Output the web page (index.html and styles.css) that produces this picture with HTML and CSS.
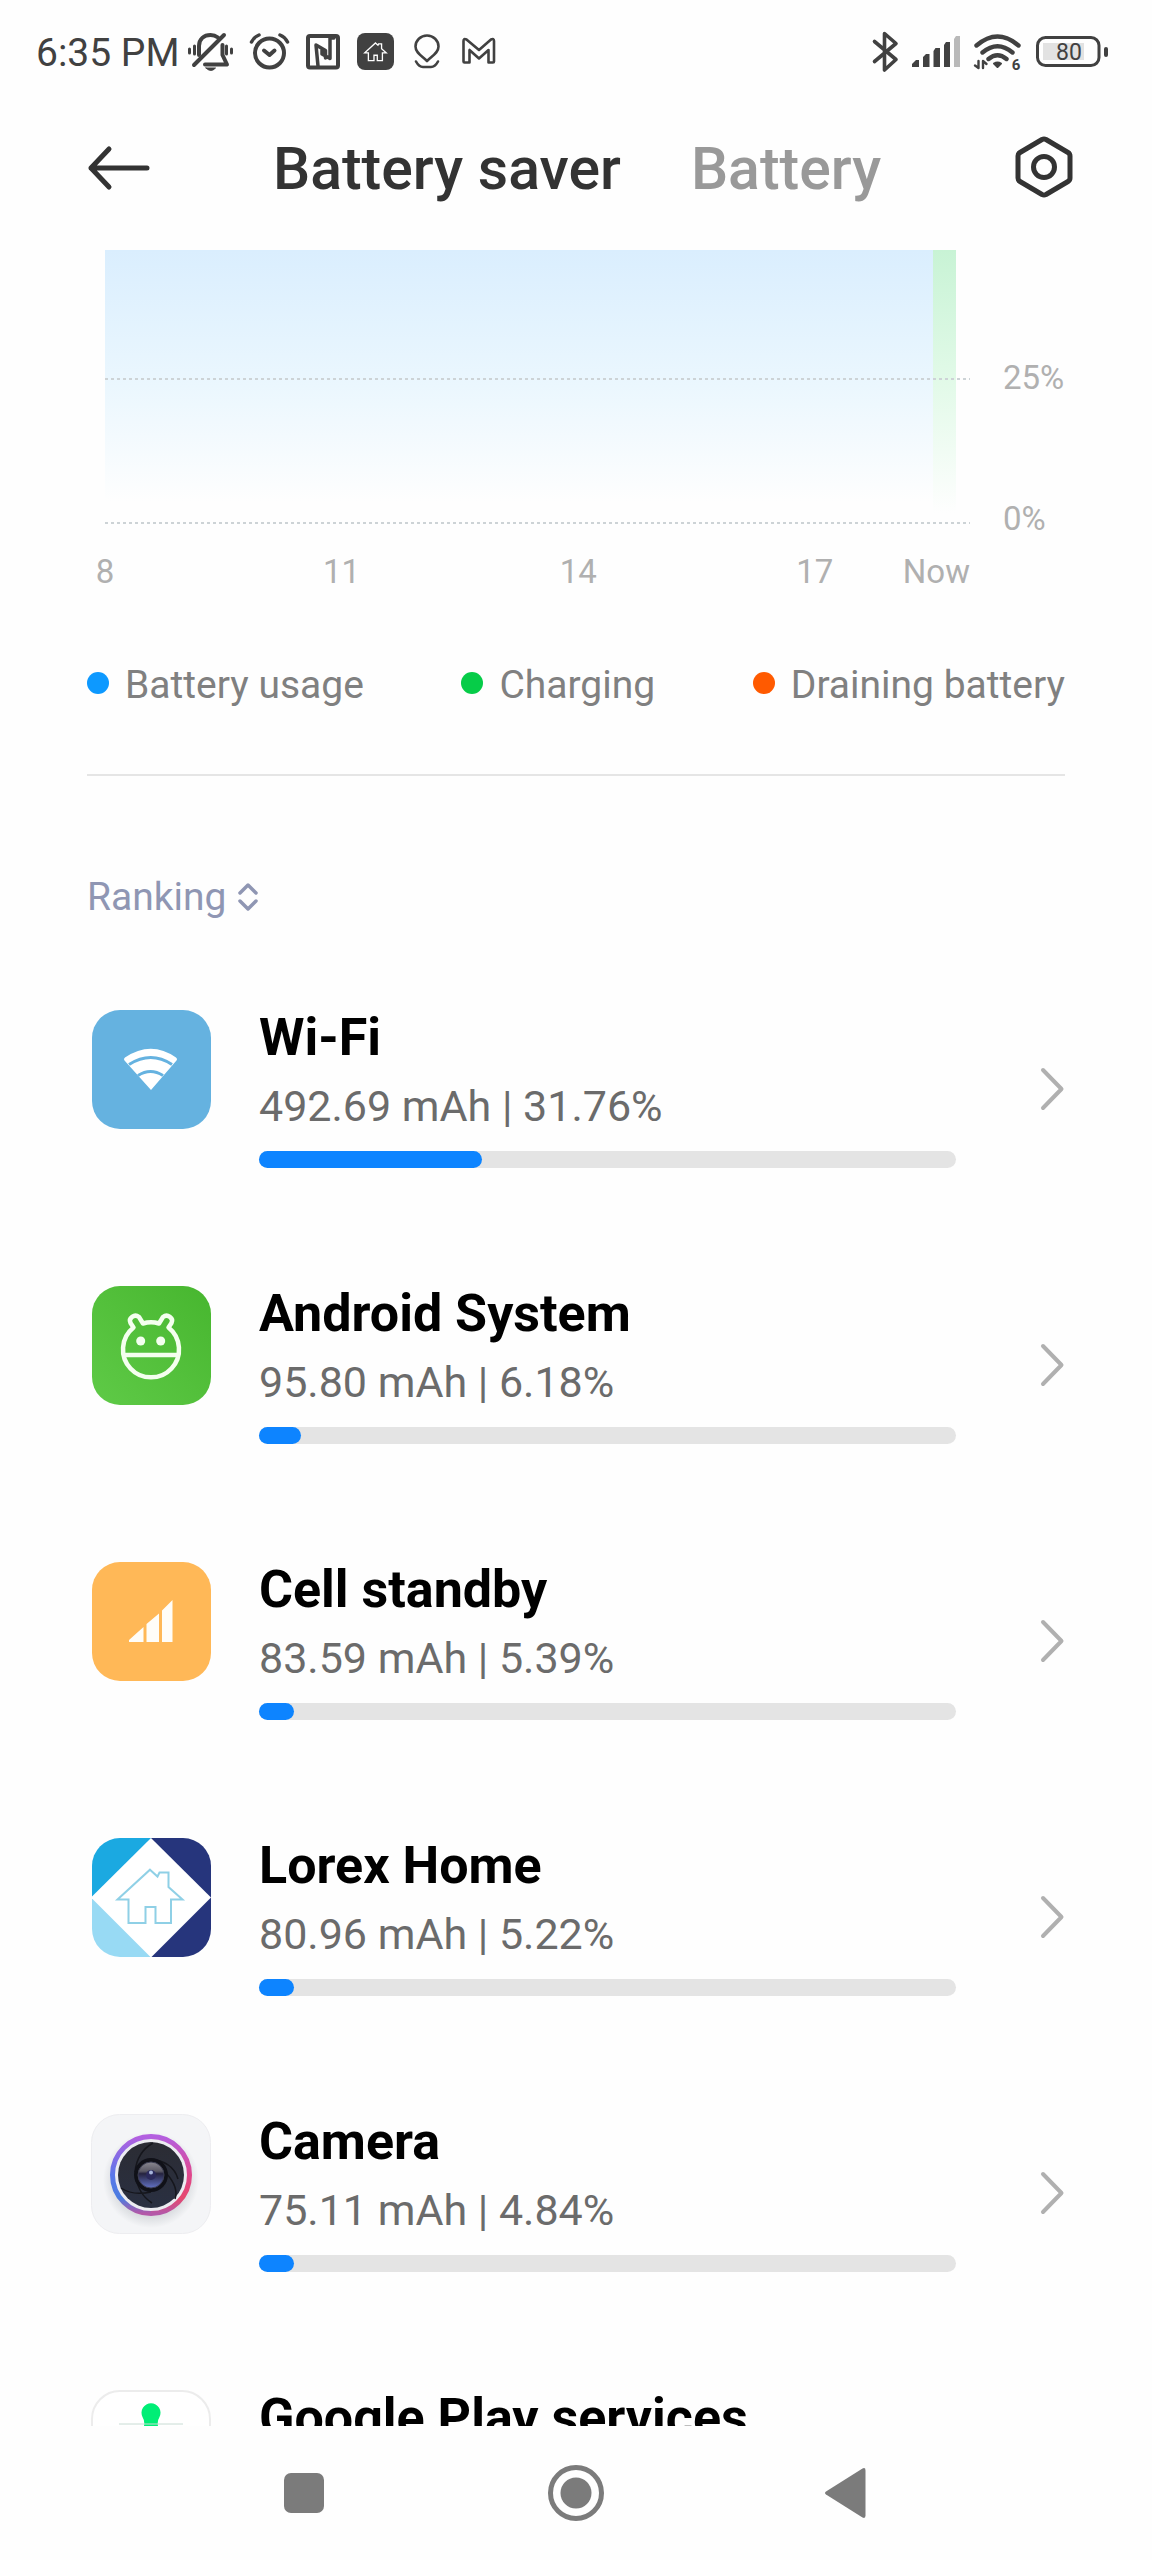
FILE: index.html
```
<!DOCTYPE html>
<html lang="en">
<head>
    <meta charset="UTF-8" />
    <meta name="viewport" content="width=device-width, initial-scale=1" />
    <title>Battery saver</title>
    <link rel="stylesheet" href="styles.css">
</head>
<body>
    <div class="status-bar">
        <span class="time">6:35 PM</span>
        <div class="status-left">
            <svg width="45" height="40" viewBox="0 0 45 40" class="line">
                <path d="M11 22V13C11 6 16 2 22.500 2c3 0 5.500 1 7.500 2.500" stroke-width="4" />
                <path d="M36 2L6 32M34.500 12v10l4.500 9.500H17" stroke-width="4" />
                <path d="M1.500 16v4M6.500 13v8M38.500 13v8M43.500 16v4" stroke-width="3" />
                <path d="M18 35h9.500q-4.500 5-9.500 0z" fill="#414141" stroke-width="1" />
            </svg>
            <svg width="39" height="40" viewBox="0 0 39 40" class="line">
                <circle cx="19.500" cy="20" r="14.500" stroke-width="4" />
                <path d="M14 17.500l5.500 4.500 5-4.500" stroke-width="4" />
                <path d="M1.500 9Q4 4 9 2M30 2q5 2 7.500 7" stroke-width="3.500" />
            </svg>
            <svg width="34" height="40" viewBox="0 0 34 40" class="line">
                <rect x="2" y="3" width="30" height="31.500" rx="2" stroke-width="4" />
                <path d="M12 33L10 12l9.500 5.500V25M28 5h-4v20.500L16 21v-4" stroke-width="3.500" />
            </svg>
            <svg width="37" height="40" viewBox="0 0 37 40">
                <rect width="37" height="37" rx="8" fill="#414141" />
                <path class="house" transform="translate(-1 -.5) scale(.33)" stroke="#fff" stroke-width="4" d="M59 31.700L66.500 38.500 68.500 34.500H77.500V49L91.500 61.500H80V85H64.500V69H54.500V85H37.500V61.500H26.500z" />
            </svg>
            <svg width="32" height="40" viewBox="0 0 32 40" class="line">
                <path d="M16 28C11 23 4.500 20 4.500 13.500a11.500 11 0 0 1 23 0C27.500 20 21 23 16 28z" stroke-width="2.600" />
                <path d="M5 28.500q3 5.500 7 5.500h8q4 0 7-5.500" stroke-width="2.600" />
            </svg>
            <svg width="38" height="40" viewBox="0 0 38 40" class="line">
                <path d="M3.500 8q0-3 3-1.500L19 17 31 6.500Q34 5 34 8v20.500q0 1-1 1h-4.500V17L19 25.500 9.500 17v12.500H4.500q-1 0-1-1z" stroke-width="2.600" />
            </svg>
        </div>
        <div class="status-right">
            <svg width="25" height="40" viewBox="0 0 25 40" class="line">
                <path d="M1.500 8.500L23 26.500 11.500 37V0.500L23 10.500 1.500 28.500" stroke-width="3.600" />
            </svg>
            <svg width="48" height="40" viewBox="0 0 48 40" fill="#414141">
                <path d="M0 34v-3l4-4h3v7zM11 34V24l3-3h3.500v13zM21.500 34V18l2-3H28v19zM32 34V12l2-3h4v25z" />
                <path d="M42 34V6l2-3h4v31z" fill="#b9b9b9" />
            </svg>
            <svg width="48" height="40" viewBox="0 0 48 40" class="line">
                <path d="M2.500 12.500Q23.500-5.500 44.500 12.500M8.500 19.500q15-12.500 30 0M14.500 26q9-7.500 18 0" stroke-width="4.400" />
                <path d="M20 30.500q3.500-2 7 0L23.500 34z" fill="#414141" stroke-width="2" />
                <path d="M4.500 28v7L1 32.500M9 35v-7l3.500 3" stroke-width="2.400" />
                <text x="42" y="36.500" class="wifi-gen">6</text>
            </svg>
            <svg width="72" height="40" viewBox="0 0 72 40">
                <rect x="7" y="10" width="41" height="17" fill="#e2e2e2" />
                <rect x="1.500" y="4.500" width="61.500" height="28" rx="8" fill="none" stroke="#414141" stroke-width="3" />
                <rect x="68" y="14" width="4" height="10" rx="2" fill="#414141" />
                <text x="33" y="27" class="charge">80</text>
            </svg>
        </div>
    </div>

    <header class="header">
        <button class="icon-button" aria-label="Back">
            <svg width="63" height="44" viewBox="0 0 63 44" fill="none" stroke="#333" stroke-width="5" stroke-linecap="round" stroke-linejoin="round">
                <path d="M60 22H4M22 3L4 22l18 19" />
            </svg>
        </button>
        <nav class="tabs">
            <a href="#saver" class="tab active">Battery saver</a>
            <a href="#battery" class="tab">Battery</a>
        </nav>
        <button class="icon-button settings" aria-label="Settings">
            <svg width="58" height="64" viewBox="0 0 58 64" fill="none" stroke="#333" stroke-width="5" stroke-linejoin="round">
                <path d="M27 3.500q2-1 4 0l22 13q2 1.200 2 3.500v22q0 2.300-2 3.500l-22 13q-2 1-4 0L5 45.500Q3 44.300 3 42V20q0-2.300 2-3.500z" />
                <circle cx="29" cy="31" r="10.500" />
            </svg>
        </button>
    </header>

    <main class="content">
        <section class="chart">
            <div class="plot">
                <div class="areas">
                    <div class="area-usage"></div>
                    <div class="area-charging"></div>
                </div>
                <div class="grid-lines">
                    <div class="grid-line"></div>
                    <div class="grid-line"></div>
                </div>
            </div>
            <div class="levels">
                <span>25%</span>
                <span>0%</span>
            </div>
            <div class="times">
                <div class="hours">
                    <span>8</span>
                    <span>11</span>
                    <span>14</span>
                    <span>17</span>
                </div>
                <span>Now</span>
            </div>
        </section>

        <ul class="legend">
            <li><i class="dot blue"></i>Battery usage</li>
            <li><i class="dot green"></i>Charging</li>
            <li><i class="dot orange"></i>Draining battery</li>
        </ul>

        <hr class="divider" />

        <button class="ranking">
            Ranking
            <svg width="20" height="28" viewBox="0 0 20 28" fill="none" stroke="#8f96b3" stroke-width="3.500" stroke-linecap="round" stroke-linejoin="round">
                <path d="M2 10l8-8 8 8M2 18l8 8 8-8" />
            </svg>
        </button>

        <div class="apps">
            <a href="#wifi" class="app">
                <svg class="app-icon" viewBox="0 0 120 120">
                    <rect x="1" width="119" height="119" rx="28" fill="#65b2e0" />
                    <path d="M60 80L33.500 50.500Q32 49 34 47.500 60 30 85 47.500q2 1.500.5 3z" fill="#fff" />
                    <path d="M38 54.500q22-14 43 0M47 65.500q12.500-8 25 0" fill="none" stroke="#65b2e0" stroke-width="3" />
                </svg>
                <div class="app-info">
                    <h2>Wi-Fi</h2>
                    <p>492.69 mAh | 31.76%</p>
                    <div class="bar"><div class="bar-fill" style="width: 32%"></div></div>
                </div>
                <svg class="chevron" viewBox="0 0 24 44"><path d="M2 3l18.500 19L2 41" /></svg>
            </a>
            <a href="#android" class="app">
                <svg class="app-icon" viewBox="0 0 120 120">
                    <defs>
                        <linearGradient id="green" x1="0" y1="1" x2="1" y2="0">
                            <stop offset="0" stop-color="#5fca47" />
                            <stop offset="1" stop-color="#47b62f" />
                        </linearGradient>
                    </defs>
                    <rect x="1" width="119" height="119" rx="28" fill="url(#green)" />
                    <g fill="none" stroke="#f4ffef" stroke-width="4.500" stroke-linejoin="round">
                        <path d="M42.500 41.500L39.500 37c-2.500-5 4-9.500 8.500-6l4 6.500q8-2.500 16 0l4-6.500c4.500-3.500 11 1 8.500 6l-3 4.500A28 28 0 1 1 42.500 41.500z" />
                        <path d="M33 69h54" />
                    </g>
                    <circle cx="49.700" cy="55" r="4.500" fill="#f4ffef" />
                    <circle cx="69.700" cy="55" r="4.500" fill="#f4ffef" />
                </svg>
                <div class="app-info">
                    <h2>Android System</h2>
                    <p>95.80 mAh | 6.18%</p>
                    <div class="bar"><div class="bar-fill" style="width: 6%"></div></div>
                </div>
                <svg class="chevron" viewBox="0 0 24 44"><path d="M2 3l18.500 19L2 41" /></svg>
            </a>
            <a href="#cell" class="app">
                <svg class="app-icon" viewBox="0 0 120 120">
                    <rect x="1" width="119" height="119" rx="28" fill="#ffb857" />
                    <path d="M38 80v-2l14.500-13v15zM55.500 80V62L68 51.500V80zM71 80V48.500L81.500 38v42z" fill="#fffdf8" />
                </svg>
                <div class="app-info">
                    <h2>Cell standby</h2>
                    <p>83.59 mAh | 5.39%</p>
                    <div class="bar"><div class="bar-fill" style="width: 5%"></div></div>
                </div>
                <svg class="chevron" viewBox="0 0 24 44"><path d="M2 3l18.500 19L2 41" /></svg>
            </a>
            <a href="#lorex" class="app">
                <svg class="app-icon" viewBox="0 0 120 120">
                    <defs>
                        <clipPath id="tile"><rect x="1" width="119" height="119" rx="28" /></clipPath>
                    </defs>
                    <g clip-path="url(#tile)">
                        <path d="M0 0h60v60H0z" fill="#1ba9e1" />
                        <path d="M0 60h60v60H0z" fill="#98daf4" />
                        <path d="M60 0h60v120H60z" fill="#26357c" />
                        <path d="M60 0l60 59.500-60 60L0 59.500z" fill="#fff" />
                    </g>
                    <path class="house" stroke="#8fd0e6" stroke-width="2" d="M59 31.700L66.500 38.500 68.500 34.500H77.500V49L91.500 61.500H80V85H64.500V69H54.500V85H37.500V61.500H26.500z" />
                </svg>
                <div class="app-info">
                    <h2>Lorex Home</h2>
                    <p>80.96 mAh | 5.22%</p>
                    <div class="bar"><div class="bar-fill" style="width: 5%"></div></div>
                </div>
                <svg class="chevron" viewBox="0 0 24 44"><path d="M2 3l18.500 19L2 41" /></svg>
            </a>
            <a href="#camera" class="app">
                <svg class="app-icon" viewBox="0 0 120 120">
                    <defs>
                        <linearGradient id="ring-left" x1="0" y1="0" x2="0" y2="1">
                            <stop offset="0" stop-color="#b45fe0" />
                            <stop offset=".5" stop-color="#5a78ea" />
                            <stop offset=".8" stop-color="#4a7ce0" />
                            <stop offset="1" stop-color="#b458a8" />
                        </linearGradient>
                        <linearGradient id="ring-right" x1="0" y1="0" x2="0" y2="1">
                            <stop offset="0" stop-color="#b45fe0" />
                            <stop offset=".5" stop-color="#e0468c" />
                            <stop offset=".8" stop-color="#e5486e" />
                            <stop offset="1" stop-color="#b458a8" />
                        </linearGradient>
                        <linearGradient id="iris" x1="0" y1="0" x2="0" y2="1">
                            <stop offset="0" stop-color="#2b2c33" />
                            <stop offset="1" stop-color="#2a3042" />
                        </linearGradient>
                        <linearGradient id="lens" x1="0" y1="0" x2="0" y2="1">
                            <stop offset="0" stop-color="#8a8890" />
                            <stop offset=".35" stop-color="#5c5a66" />
                            <stop offset=".45" stop-color="#25233f" />
                            <stop offset="1" stop-color="#6272c4" />
                        </linearGradient>
                        <radialGradient id="shade">
                            <stop offset=".7" stop-color="#d3d6da" />
                            <stop offset="1" stop-color="#f4f5f7" />
                        </radialGradient>
                    </defs>
                    <rect x=".5" y=".5" width="119" height="119" rx="28" fill="#f4f5f7" stroke="#ededf0" />
                    <circle cx="60" cy="66" r="48" fill="url(#shade)" />
                    <circle cx="60" cy="61" r="40" fill="#ececf1" />
                    <path d="M60 22.500a38.500 38.500 0 0 0 0 77" fill="none" stroke="url(#ring-left)" stroke-width="5" />
                    <path d="M60 22.500a38.500 38.500 0 0 1 0 77" fill="none" stroke="url(#ring-right)" stroke-width="5" />
                    <circle cx="60" cy="61" r="33" fill="url(#iris)" />
                    <path d="M44 58Q46 38 62 29M58 45q24 2 29 20M76 60q12 14 8 25M60 78q-18 4-30-4M45 62q2 18 16 27" fill="none" stroke="#15161c" stroke-width="1.500" />
                    <circle cx="60" cy="61" r="17" fill="#101118" />
                    <circle cx="60" cy="61" r="13" fill="url(#lens)" stroke="#3c3e52" />
                    <circle cx="60" cy="61" r="5" fill="#2b2a5c" />
                    <circle cx="60" cy="58.500" r="2" fill="#a8b6dc" />
                </svg>
                <div class="app-info">
                    <h2>Camera</h2>
                    <p>75.11 mAh | 4.84%</p>
                    <div class="bar"><div class="bar-fill" style="width: 5%"></div></div>
                </div>
                <svg class="chevron" viewBox="0 0 24 44"><path d="M2 3l18.500 19L2 41" /></svg>
            </a>
            <a href="#play" class="app">
                <svg class="app-icon" viewBox="0 0 120 120">
                    <rect x="1" y="1" width="118" height="118" rx="28" fill="#fff" stroke="#ececec" stroke-width="2" />
                    <path d="M53 36q1-5-1.500-9a9.500 9.500 0 1 1 17 0Q66 31 67 36v48H53z" fill="#00ee76" />
                    <path d="M28 34h64" stroke="#c8dcd4" />
                </svg>
                <div class="app-info">
                    <h2>Google Play services</h2>
                </div>
            </a>
        </div>
    </main>

    <footer class="nav-bar">
        <button class="icon-button" aria-label="Recent apps">
            <svg width="58" height="58" viewBox="0 0 58 58" fill="#7b7b7b"><rect x="9" y="9" width="40" height="40" rx="7" /></svg>
        </button>
        <button class="icon-button" aria-label="Home">
            <svg width="58" height="58" viewBox="0 0 58 58" fill="#7b7b7b">
                <circle cx="29" cy="29" r="15.500" />
                <circle cx="29" cy="29" r="25.500" fill="none" stroke="#7b7b7b" stroke-width="5" />
            </svg>
        </button>
        <button class="icon-button" aria-label="Back">
            <svg width="58" height="58" viewBox="0 0 58 58" fill="#7b7b7b"><path d="M7 27.500L43.500 4.500q3-1.500 3 2v45q0 3.500-3 2L7 30.500q-2-1.500 0-3z" /></svg>
        </button>
    </footer>
</body>
</html>
```
FILE: styles.css
```
:root {
    --bg: #fefefe;
    --ink: #333;
    --status: #414141;
    --muted: #b0b0b0;
    --accent: #0d84ff;
    --side: 87px;
}

* {
    box-sizing: border-box;
}

body {
    margin: 0;
    height: 100vh;
    display: flex;
    flex-direction: column;
    background: var(--bg);
    font-family: Roboto, "Liberation Sans", sans-serif;
    color: var(--ink);
}

a {
    color: inherit;
    text-decoration: none;
}

button {
    border: none;
    padding: 0;
    background: none;
    font-family: inherit;
    cursor: pointer;
}

svg {
    display: block;
    flex: none;
    overflow: visible;
}

/* Status bar */
.status-bar {
    flex: none;
    display: flex;
    align-items: center;
    height: 106px;
    padding: 0 44px 0 36px;
    font-size: 39px;
    color: var(--status);
}

.status-left,
.status-right {
    display: flex;
    gap: 17px;
    margin-left: 8px;
}

.status-right {
    gap: 14px;
    margin-left: auto;
}

.line {
    fill: none;
    stroke: var(--status);
    stroke-linecap: round;
    stroke-linejoin: round;
}

.house {
    fill: none;
}

.charge,
.wifi-gen {
    fill: var(--status);
    stroke: none;
    text-anchor: middle;
    font-size: 23px;
}

.wifi-gen {
    font-size: 15px;
    font-weight: 700;
}

/* Header */
.header {
    flex: none;
    display: grid;
    grid-template-columns: 1fr auto 1fr;
    align-items: center;
    height: 124px;
    padding: 0 79px 0 var(--side);
}

.tabs {
    display: flex;
    gap: 70px;
    margin-right: 6px;
    font-size: 59px;
    font-weight: 500;
    color: #999;
}

.tab.active {
    color: var(--ink);
}

.settings {
    justify-self: end;
}

/* Content */
.content {
    flex: 1;
    min-height: 0;
    overflow: hidden;
    padding: 20px var(--side) 0;
}

.chart {
    display: grid;
    grid-template-columns: 1fr 62px;
    column-gap: 33px;
    padding-left: 18px;
    font-size: 33px;
    line-height: 40px;
    color: var(--muted);
}

.plot {
    display: grid;
    height: 274px;
}

.areas,
.grid-lines {
    grid-area: 1 / 1;
    display: flex;
}

.areas {
    margin-right: 14px;
}

.area-usage {
    flex: 1;
    background: linear-gradient(#daeefe, #ebf7fe 50%, #fefefe 92%);
}

.area-charging {
    width: 23px;
    background: linear-gradient(#c8f3d5, #e3fae9 50%, #fefefe 96%);
}

.grid-lines {
    flex-direction: column;
    justify-content: flex-end;
    gap: 142px;
}

.grid-line {
    height: 2px;
    background: repeating-linear-gradient(90deg, #cdd3d6 0 3px, transparent 3px 6px);
}

.levels {
    display: flex;
    flex-direction: column;
    gap: 101px;
    padding-top: 108px;
}

.times {
    display: flex;
    gap: 68px;
    margin: 13px 0 0 -20px;
}

.hours {
    flex: 1;
    display: flex;
    justify-content: space-between;
}

.hours span {
    width: 40px;
    text-align: center;
}

.legend {
    display: flex;
    justify-content: space-between;
    margin: 71px 0 0;
    padding: 0;
    list-style: none;
    font-size: 39px;
    line-height: 44px;
    color: #808080;
}

.legend li {
    display: flex;
    align-items: center;
}

.dot {
    width: 22px;
    height: 22px;
    margin: 0 16px 4px 0;
    border-radius: 50%;
}

.blue { background: #0d99ff; }
.green { background: #06cc48; }
.orange { background: #ff5a00; }

.divider {
    height: 2px;
    margin: 67px 0 99px;
    border: none;
    background: #e5e5e5;
}

.ranking {
    display: flex;
    align-items: center;
    gap: 12px;
    font-size: 39px;
    line-height: 44px;
    color: #8f96b3;
}

/* App list */
.apps {
    display: flex;
    flex-direction: column;
    gap: 118px;
    margin-top: 91px;
}

.app {
    display: flex;
    align-items: center;
    padding-left: 4px;
}

.app-icon {
    width: 120px;
    height: 120px;
    align-self: flex-start;
}

.app-info {
    flex: 1;
    align-self: flex-start;
    margin: 0 85px 0 48px;
}

.app-info h2 {
    margin: 0;
    font-size: 52px;
    font-weight: 700;
    line-height: 56px;
    color: #000;
}

.app-info p {
    margin: 10px 0 15px;
    font-size: 43px;
    line-height: 60px;
    color: #6b6b6b;
}

.bar {
    height: 17px;
    border-radius: 9px;
    background: #e4e4e4;
}

.bar-fill {
    height: 100%;
    border-radius: 9px;
    background: var(--accent);
}

.chevron {
    width: 24px;
    height: 44px;
    fill: none;
    stroke: #b0b0b0;
    stroke-width: 4px;
    stroke-linecap: round;
    stroke-linejoin: round;
}

/* Navigation bar */
.nav-bar {
    flex: none;
    display: flex;
    align-items: center;
    justify-content: center;
    gap: 214px;
    height: 134px;
}
```
